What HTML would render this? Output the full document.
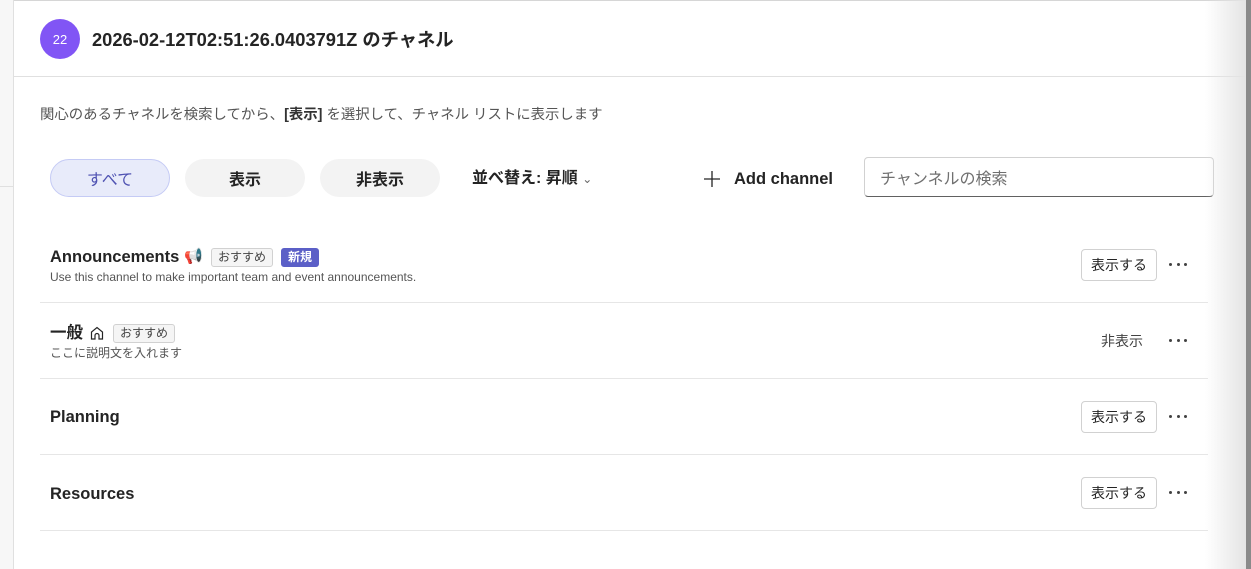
<!DOCTYPE html>
<html><head><meta charset="utf-8"><style>
*{box-sizing:border-box;margin:0;padding:0}
body{width:1251px;height:569px;overflow:hidden;background:#fff;font-family:"Liberation Sans","Noto Sans CJK JP",sans-serif;color:#242424;position:relative}
.left{position:absolute;left:0;top:0;width:14px;height:569px;background:#f7f7f7;border-right:1px solid #e0e0e0}
.left:after{content:"";position:absolute;left:0;top:186px;width:13px;border-top:1px solid #e0e0e0}
.topline{position:absolute;left:0;top:0;width:1251px;border-top:1px solid #d6d6d6}
.rshade{position:absolute;left:1205px;top:0;width:41px;height:569px;background:linear-gradient(to right,rgba(255,255,255,0),#e4e4e4)}
.rborder{position:absolute;left:1246px;top:0;width:5px;height:569px;background:#8a8a8a}
.hdr{position:absolute;left:14px;top:0;width:1232px;height:77px;border-bottom:1px solid #e0e0e0}
.av{position:absolute;left:40px;top:19px;width:40px;height:40px;border-radius:50%;background:#8155f5;color:#fff;font-size:13px;display:flex;align-items:center;justify-content:center}
.title{position:absolute;left:92px;top:26px;font-size:18.3px;font-weight:bold;line-height:28px}
.desc{position:absolute;left:40px;top:104px;font-size:14.4px;color:#555;line-height:22px}
.pill{position:absolute;top:159px;height:38px;width:120px;border-radius:19px;background:#f3f3f3;font-size:16px;font-weight:bold;display:flex;align-items:center;justify-content:center}
.sort{position:absolute;left:472px;top:167px;font-size:16px;font-weight:bold;line-height:24px}
.add{position:absolute;left:702px;top:165px;font-size:16.5px;font-weight:bold;line-height:28px;display:flex;align-items:center}
.search{position:absolute;left:864px;top:157px;width:350px;height:40px;border:1px solid #d1d1d1;border-bottom:1px solid #616161;border-radius:4px;font-size:16px;color:#707070;padding:0 15px;display:flex;align-items:center}
.row{position:absolute;left:40px;width:1168px;height:76px;border-bottom:1px solid #e6e6e6}
.name{position:absolute;left:10px;font-size:16.5px;font-weight:bold;line-height:22px;display:flex;align-items:center}
.sub{position:absolute;left:10px;font-size:12px;color:#555;line-height:16px}
.tag{display:inline-flex;align-items:center;font-size:12px;font-weight:normal;border:1px solid #d1d1d1;background:#f5f5f5;border-radius:3px;padding:0 6px;height:19px;color:#424242;margin-left:8px}
.new{background:#5b5fc7;color:#fff;border-color:#5b5fc7;font-weight:bold}
.btn{position:absolute;left:1041px;width:76px;height:32px;border:1px solid #d1d1d1;border-radius:4px;font-size:14px;display:flex;align-items:center;justify-content:center}
.dots{position:absolute;left:1129px;width:18px;height:4px;display:flex;justify-content:space-between}
.dots i{width:3px;height:3px;border-radius:50%;background:#424242;display:block}
</style></head><body>
<div class="topline"></div><div class="left"></div>
<div class="hdr"></div>
<div class="av">22</div>
<div class="title">2026-02-12T02:51:26.0403791Z のチャネル</div>
<div class="desc">関心のあるチャネルを検索してから、<b style="color:#333">[表示]</b> を選択して、チャネル リストに表示します</div>
<div class="pill" style="left:50px;background:#e8ebfa;border:1px solid #c5cbf5;color:#4f52b2;font-weight:normal">すべて</div>
<div class="pill" style="left:185px">表示</div>
<div class="pill" style="left:320px">非表示</div>
<div class="sort">並べ替え: 昇順 <span style="font-weight:normal;font-size:12px;color:#666">&#8964;</span></div>
<div class="add"><svg width="20" height="20" viewBox="0 0 20 20" style="margin-right:12px"><path d="M10 2v16M2 10h16" stroke="#242424" stroke-width="1.3"/></svg>Add channel</div>
<div class="search">チャンネルの検索</div>

<div class="row" style="top:227px">
<div class="name" style="top:19px">Announcements <span style="color:#e8336a;font-size:15px;margin-left:5px">📢</span><span class="tag">おすすめ</span><span class="tag new">新規</span></div>
<div class="sub" style="top:42px">Use this channel to make important team and event announcements.</div>
<div class="btn" style="top:22px">表示する</div><div class="dots" style="top:36px"><i></i><i></i><i></i></div>
</div>
<div class="row" style="top:303px">
<div class="name" style="top:19px">一般 <svg width="16" height="16" viewBox="0 0 16 16" style="margin-left:6px"><path d="M2.5 14V7L8 2.5 13.5 7V14H10V10.5a2 2 0 0 0-4 0V14Z" fill="none" stroke="#242424" stroke-width="1.2"/></svg><span class="tag">おすすめ</span></div>
<div class="sub" style="top:42px">ここに説明文を入れます</div>
<div style="position:absolute;left:1061px;top:29px;font-size:14px;color:#424242;line-height:18px">非表示</div><div class="dots" style="top:36px"><i></i><i></i><i></i></div>
</div>
<div class="row" style="top:379px">
<div class="name" style="top:27px">Planning</div>
<div class="btn" style="top:22px">表示する</div><div class="dots" style="top:36px"><i></i><i></i><i></i></div>
</div>
<div class="row" style="top:455px">
<div class="name" style="top:28px">Resources</div>
<div class="btn" style="top:22px">表示する</div><div class="dots" style="top:36px"><i></i><i></i><i></i></div>
</div>
<div class="rshade"></div><div class="rborder"></div>
</body></html>
